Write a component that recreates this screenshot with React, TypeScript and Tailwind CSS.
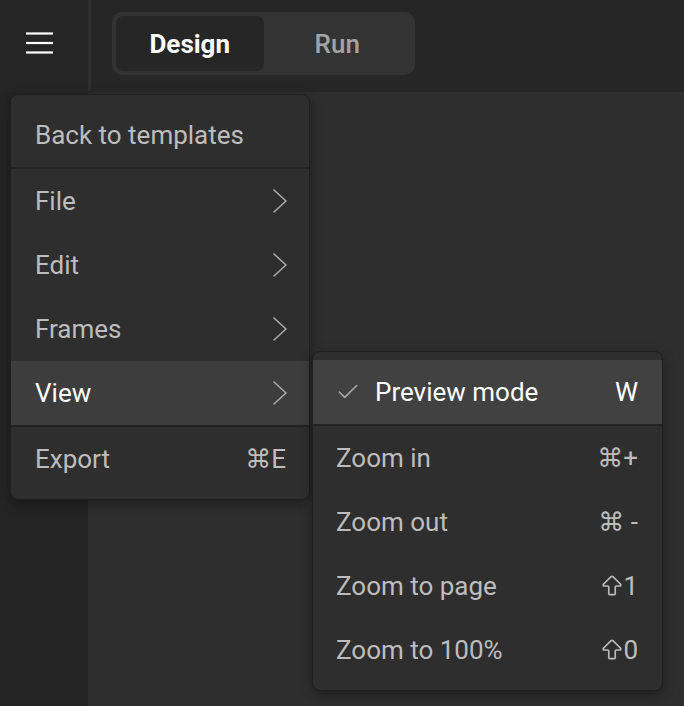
import { Check, ArrowBigUp } from 'lucide-react'

const menuItems = [
  { label: 'File', sub: true },
  { label: 'Edit', sub: true },
  { label: 'Frames', sub: true },
  { label: 'View', sub: true, active: true },
]

const viewItems = [
  { label: 'Zoom in', key: '⌘+' },
  { label: 'Zoom out', key: '⌘ -' },
  { label: 'Zoom to page', key: '1', shift: true },
  { label: 'Zoom to 100%', key: '0', shift: true },
]

const Chevron = () => (
  <svg width="16" height="24" viewBox="0 0 16 24" fill="none" stroke="#a8a8a8" strokeWidth="1.6" strokeLinecap="round" strokeLinejoin="round">
    <polyline points="2,1 14,12 2,23" />
  </svg>
)

const Hamburger = () => (
  <svg width="27" height="22" viewBox="0 0 27 22" fill="none" stroke="#ffffff" strokeWidth="2.2">
    <line x1="0" y1="1.5" x2="27" y2="1.5" />
    <line x1="0" y1="11" x2="27" y2="11" />
    <line x1="0" y1="20.5" x2="27" y2="20.5" />
  </svg>
)

export default function App() {
  return (
    <div
      className="relative w-[684px] h-[706px] overflow-hidden bg-[#2e2e2e] flex flex-col"
      style={{ fontFamily: 'Roboto, "Liberation Sans", "DejaVu Sans", sans-serif' }}
    >
      {/* header */}
      <div className="h-[92px] flex items-stretch bg-[#262626] shrink-0">
        <div className="w-[88px] pl-[26px] pt-[32px]">
          <Hamburger />
        </div>
        <div className="w-[3px] h-[91px] bg-[#2f2f2f]" />
        <div className="ml-[21px] mt-[12px] h-[63px] w-[303px] rounded-[10px] bg-[#333333] p-[4px] grid grid-cols-2">
          <div className="rounded-[8px] bg-[#262626] flex items-center justify-center pt-[2px] text-white text-[26px] font-bold">
            Design
          </div>
          <div className="flex items-center justify-center pt-[2px] text-[#a3a3a3] text-[26px] font-medium">
            Run
          </div>
        </div>
      </div>

      {/* body */}
      <div className="flex-1 flex">
        <div className="w-[88px] bg-[#242424]" />
        <div className="flex-1 bg-[#2e2e2e]" />
      </div>

      {/* main menu */}
      <div className="absolute left-[10px] top-[94px] w-[300px] py-[8px] rounded-[8px] bg-[#2e2e2e] border border-[#1f1f1f] shadow-[0_4px_12px_rgba(0,0,0,0.35)] text-[26px] text-[#bdbdbd]">
        <div className="h-[64px] flex items-center px-[24px]">Back to templates</div>
        <div className="h-[2px] bg-[#222222]" />
        {menuItems.map((item) => (
          <div
            key={item.label}
            className={
              item.active
                ? 'h-[64px] flex items-center justify-between pl-[24px] pr-[21px] bg-[#3d3d3d] text-white'
                : 'h-[64px] flex items-center justify-between pl-[24px] pr-[21px]'
            }
          >
            <span>{item.label}</span>
            <Chevron />
          </div>
        ))}
        <div className="h-[2px] bg-[#222222]" />
        <div className="h-[64px] flex items-center justify-between pl-[24px] pr-[23px]">
          <span>Export</span>
          <span>⌘E</span>
        </div>
      </div>

      {/* view submenu */}
      <div className="absolute left-[312px] top-[351px] w-[351px] py-[8px] rounded-[8px] bg-[#2e2e2e] border border-[#1f1f1f] shadow-[0_4px_12px_rgba(0,0,0,0.35)] text-[26px] text-[#bdbdbd]">
        <div className="h-[64px] flex items-center justify-between pl-[22px] pr-[24px] bg-[#414141] text-white">
          <div className="flex items-center gap-[14px]">
            <Check size={26} strokeWidth={1.5} color="#a8a8a8" />
            <span>Preview mode</span>
          </div>
          <span>W</span>
        </div>
        <div className="h-[2px] bg-[#222222]" />
        {viewItems.map((item) => (
          <div key={item.label} className="h-[64px] flex items-center justify-between pl-[23px] pr-[24px]">
            <span>{item.label}</span>
            <span className="flex items-center">
              {item.shift && <ArrowBigUp size={26} strokeWidth={1.5} color="#bdbdbd" className="-mr-[2px]" />}
              {item.key}
            </span>
          </div>
        ))}
      </div>
    </div>
  )
}
